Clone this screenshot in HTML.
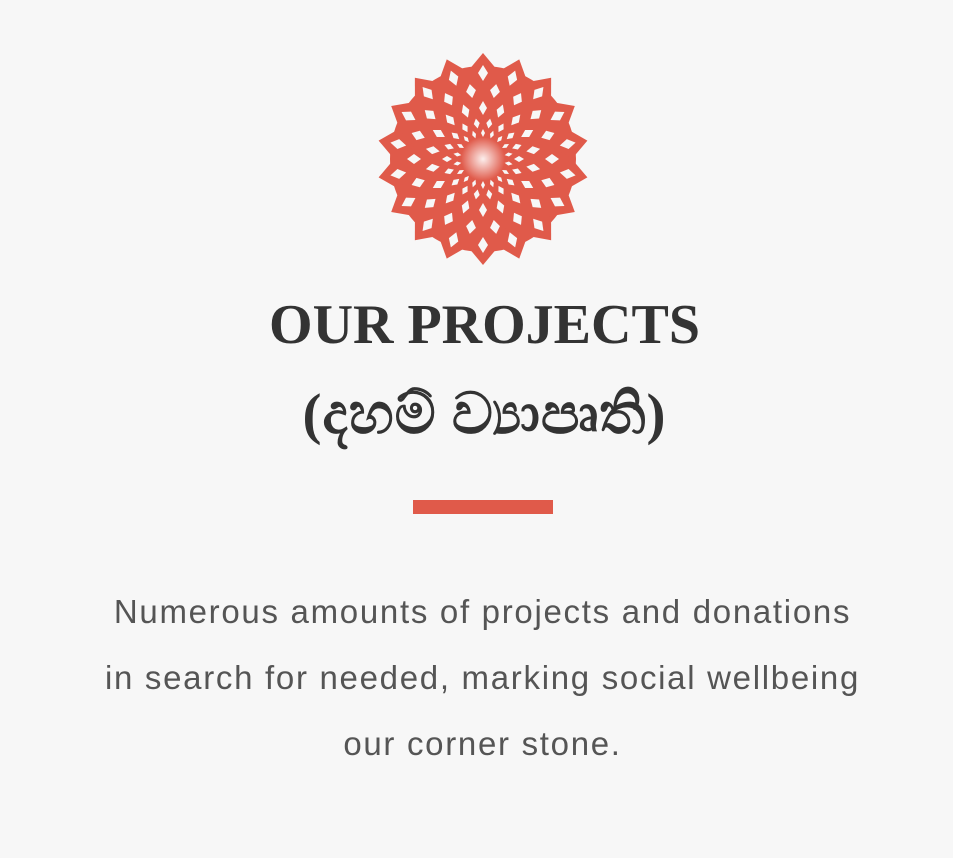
<!DOCTYPE html>
<html><head><meta charset="utf-8"><style>
body{margin:0;background:#f7f7f7;width:953px;height:858px;overflow:hidden;font-family:"Liberation Sans",sans-serif}
svg.f{position:absolute;left:376px;top:52px}
h1{position:absolute;top:290px;left:8px;width:953px;margin:0;text-align:center;font:bold 56px/70px "Liberation Serif","DejaVu Serif",serif;color:#333}
h2{position:absolute;top:380px;left:8px;width:953px;margin:0;text-align:center;font:bold 57px/70px "Liberation Serif","DejaVu Serif",serif;color:#333;letter-spacing:1px}
.bar{position:absolute;left:413px;top:500px;width:140px;height:14px;background:#e05a4a}
p{position:absolute;top:579px;left:6px;width:953px;margin:0;text-align:center;font:33px/66px "Liberation Sans",sans-serif;letter-spacing:1.7px;color:#555}
</style></head><body>
<svg class="f" width="214" height="214" viewBox="-107 -107 214 214">
<defs>
<radialGradient id="g"><stop offset="0" stop-color="#fff" stop-opacity=".9"/><stop offset="1" stop-color="#fff" stop-opacity="0"/></radialGradient>
<g id="a">
<path d="M0,-106 L15,-88 L0,-70 L-15,-88Z" fill="#e05a4a"/>
<path d="M0,-94 L5,-86 L0,-78 L-5,-86Z" fill="#f7f7f7"/>
<path d="M0,-58 L4,-51 L0,-44 L-4,-51Z" fill="#f7f7f7"/>
<path d="M0,-30 L2,-26 L0,-22 L-2,-26Z" fill="#f7f7f7"/>
</g>
<g id="b">
<path d="M0,-76 L5,-69 L0,-62 L-5,-69Z" fill="#f7f7f7"/>
<path d="M0,-41 L3,-36 L0,-31 L-3,-36Z" fill="#f7f7f7"/>
</g>
</defs>
<circle r="93" fill="#e05a4a"/>
<use href="#a"/><use href="#a" transform="rotate(20)"/><use href="#a" transform="rotate(40)"/><use href="#a" transform="rotate(60)"/><use href="#a" transform="rotate(80)"/><use href="#a" transform="rotate(100)"/><use href="#a" transform="rotate(120)"/><use href="#a" transform="rotate(140)"/><use href="#a" transform="rotate(160)"/><use href="#a" transform="rotate(180)"/><use href="#a" transform="rotate(200)"/><use href="#a" transform="rotate(220)"/><use href="#a" transform="rotate(240)"/><use href="#a" transform="rotate(260)"/><use href="#a" transform="rotate(280)"/><use href="#a" transform="rotate(300)"/><use href="#a" transform="rotate(320)"/><use href="#a" transform="rotate(340)"/>
<use href="#b" transform="rotate(10)"/><use href="#b" transform="rotate(30)"/><use href="#b" transform="rotate(50)"/><use href="#b" transform="rotate(70)"/><use href="#b" transform="rotate(90)"/><use href="#b" transform="rotate(110)"/><use href="#b" transform="rotate(130)"/><use href="#b" transform="rotate(150)"/><use href="#b" transform="rotate(170)"/><use href="#b" transform="rotate(190)"/><use href="#b" transform="rotate(210)"/><use href="#b" transform="rotate(230)"/><use href="#b" transform="rotate(250)"/><use href="#b" transform="rotate(270)"/><use href="#b" transform="rotate(290)"/><use href="#b" transform="rotate(310)"/><use href="#b" transform="rotate(330)"/><use href="#b" transform="rotate(350)"/>
<circle r="22" fill="url(#g)"/>
</svg>
<h1>OUR PROJECTS</h1>
<h2>(දහම් ව්‍යාපෘති)</h2>
<div class="bar"></div>
<p>Numerous amounts of projects and donations<br>in search for needed, marking social wellbeing<br>our corner stone.</p>
</body></html>
